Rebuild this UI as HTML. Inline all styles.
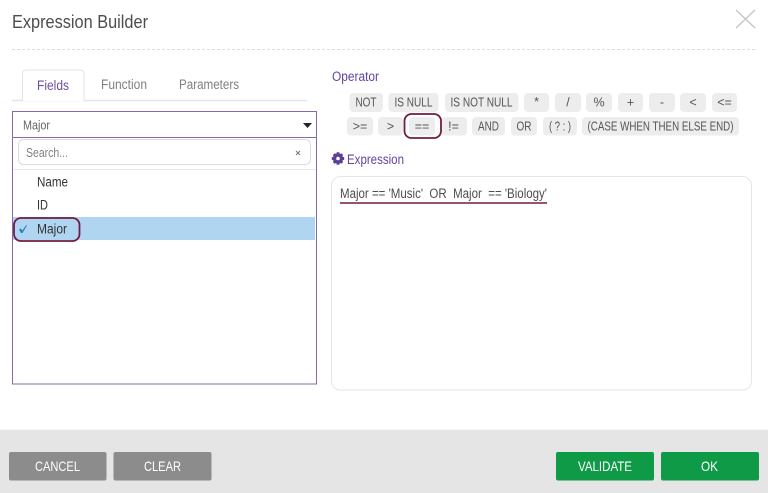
<!DOCTYPE html>
<html><head><meta charset="utf-8"><style>
html,body{margin:0;padding:0;background:#fff;overflow:hidden}
svg{display:block;font-family:"Liberation Sans",sans-serif;filter:blur(.3px)}
text{fill:#555}
.op{font-size:12.500px;fill:#555;text-anchor:middle}
.b{fill:#ededed}
.f{font-size:14px;fill:#fff}
</style></head><body>
<svg width="768" height="493" viewBox="0 0 768 493" xmlns="http://www.w3.org/2000/svg">
<rect width="768" height="493" fill="#fff"/>
<text x="12" y="28" font-size="18" textLength="136" lengthAdjust="spacingAndGlyphs" style="fill:#4d4d4d">Expression Builder</text>
<path d="M736 10L755 28M755 10L736 28" stroke="#c4c4c4" stroke-width="1.300" fill="none"/>
<line x1="12" y1="49.500" x2="756" y2="49.500" stroke="#dcdcdc" stroke-dasharray="3 2"/>

<line x1="12" y1="100.500" x2="307" y2="100.500" stroke="#e6e6e6" stroke-width="1.600"/>
<path d="M22.500 101V74q0-4 4-4H80q4 0 4 4V101" fill="#fff" stroke="#e4e4e4"/>
<text x="37" y="90" font-size="13.500" textLength="32" lengthAdjust="spacingAndGlyphs" style="fill:#6f4fa0">Fields</text>
<text x="101" y="89" font-size="13.500" textLength="46" lengthAdjust="spacingAndGlyphs" style="fill:#808080">Function</text>
<text x="179" y="89" font-size="13.500" textLength="60" lengthAdjust="spacingAndGlyphs" style="fill:#808080">Parameters</text>

<rect x="12.500" y="111.500" width="304" height="272.500" fill="#fff" stroke="#8668b4"/>
<line x1="13" y1="137.500" x2="316" y2="137.500" stroke="#8668b4"/>
<text x="23" y="129.500" font-size="13" textLength="27" lengthAdjust="spacingAndGlyphs" style="fill:#666">Major</text>
<path d="M303 123H312L307.500 128Z" fill="#222"/>
<rect x="18.500" y="139.500" width="292" height="25" rx="5" fill="#fff" stroke="#dcdcdc"/>
<text x="26" y="157" font-size="13" textLength="42" lengthAdjust="spacingAndGlyphs" style="fill:#808080">Search...</text>
<path d="M296 151L300 155M300 151L296 155" stroke="#777" stroke-width="1"/>
<line x1="13" y1="169.500" x2="316" y2="169.500" stroke="#e8e8e8"/>
<text x="37" y="186.500" font-size="13.500" textLength="31" lengthAdjust="spacingAndGlyphs" style="fill:#333">Name</text>
<text x="37" y="209.500" font-size="13.500" textLength="11" lengthAdjust="spacingAndGlyphs" style="fill:#333">ID</text>
<rect x="13" y="217" width="302" height="23" fill="#b0d5f0"/>
<text x="37" y="233.500" font-size="13.500" textLength="30" lengthAdjust="spacingAndGlyphs" style="fill:#333">Major</text>
<path d="M19 229.500L20.800 228.500L22.300 230.500L26.300 225L27 225.500L22.500 233H21Z" fill="#2a80c0"/>
<rect x="14" y="218" width="65.500" height="23" rx="7" fill="none" stroke="#731c42" stroke-width="1.800"/>

<text x="332" y="81" font-size="13.500" textLength="47" lengthAdjust="spacingAndGlyphs" style="fill:#6244a0">Operator</text>

<rect class="b" x="349.500" y="93" width="33.500" height="19" rx="4"/><text class="op" x="366" y="106.500" textLength="21" lengthAdjust="spacingAndGlyphs">NOT</text>
<rect class="b" x="388.500" y="93" width="50" height="19" rx="4"/><text class="op" x="413.500" y="106.500" textLength="38" lengthAdjust="spacingAndGlyphs">IS NULL</text>
<rect class="b" x="445" y="93" width="73.500" height="19" rx="4"/><text class="op" x="481.500" y="106.500" textLength="62" lengthAdjust="spacingAndGlyphs">IS NOT NULL</text>
<rect class="b" x="524" y="93" width="25" height="19" rx="4"/><text class="op" x="536.500" y="106">*</text>
<rect class="b" x="555" y="93" width="26" height="19" rx="4"/><text class="op" x="568" y="106.500">/</text>
<rect class="b" x="586" y="93" width="26" height="19" rx="4"/><text class="op" x="599" y="106.500">%</text>
<rect class="b" x="618" y="93" width="25" height="19" rx="4"/><text class="op" x="630.500" y="106.500">+</text>
<rect class="b" x="649" y="93" width="26" height="19" rx="4"/><text class="op" x="662" y="106.500">-</text>
<rect class="b" x="680" y="93" width="26" height="19" rx="4"/><text class="op" x="693" y="106.500">&lt;</text>
<rect class="b" x="712" y="93" width="25" height="19" rx="4"/><text class="op" x="724.500" y="106.500">&lt;=</text>

<rect class="b" x="347" y="117" width="26" height="18.500" rx="4"/><text class="op" x="360" y="130.500">&gt;=</text>
<rect class="b" x="378" y="117" width="25" height="18.500" rx="4"/><text class="op" x="390.500" y="130.500">&gt;</text>
<rect class="b" x="409" y="117" width="26" height="18.500" rx="4"/><text class="op" x="422" y="130.500">==</text>
<rect class="b" x="441" y="117" width="26" height="18.500" rx="4"/><text class="op" x="453.500" y="130.500">!=</text>
<rect class="b" x="472" y="117" width="33" height="18.500" rx="4"/><text class="op" x="488.500" y="130.500" textLength="21" lengthAdjust="spacingAndGlyphs">AND</text>
<rect class="b" x="511" y="117" width="26" height="18.500" rx="4"/><text class="op" x="524" y="130.500" textLength="15" lengthAdjust="spacingAndGlyphs">OR</text>
<rect class="b" x="543" y="117" width="34" height="18.500" rx="4"/><text class="op" x="560" y="130.500" textLength="22" lengthAdjust="spacingAndGlyphs">( ? : )</text>
<rect class="b" x="582" y="117" width="157" height="18.500" rx="4"/><text class="op" x="660.500" y="130.500" textLength="146" lengthAdjust="spacingAndGlyphs">(CASE WHEN THEN ELSE END)</text>
<rect x="404.500" y="114" width="36.500" height="24" rx="7" fill="none" stroke="#731c42" stroke-width="1.800"/>

<g transform="translate(338 158.500)" fill="#5b3f96">
<path d="M-1.300-6.200H1.300L1.800-4.400 3.300-5.300 5.100-3.500 4.300-2 6.200-1.300V1.300L4.300 2 5.100 3.500 3.300 5.300 1.800 4.400 1.300 6.200H-1.300L-1.800 4.400-3.300 5.300-5.100 3.500-4.300 2-6.200 1.300V-1.300L-4.300-2-5.100-3.500-3.300-5.300-1.800-4.400ZM0-1.800A1.800 1.800 0 1 0 0 1.800A1.800 1.800 0 1 0 0-1.800Z" fill-rule="evenodd"/>
</g>
<text x="347" y="164" font-size="13.500" textLength="57" lengthAdjust="spacingAndGlyphs" style="fill:#6244a0">Expression</text>

<rect x="331.500" y="176.500" width="420" height="213.500" rx="9" fill="#fff" stroke="#e6e6e6"/>
<text x="340" y="198" font-size="13.500" xml:space="preserve" textLength="207" lengthAdjust="spacingAndGlyphs" style="fill:#4d4d4d">Major == 'Music'  OR  Major  == 'Biology'</text>
<line x1="340" y1="203" x2="547" y2="203" stroke="#731c42" stroke-width="1.600"/>

<rect x="0" y="430" width="768" height="63" fill="#e5e5e5"/>
<line x1="0" y1="430" x2="768" y2="430" stroke="#ebebeb"/>
<rect x="9" y="452" width="97.500" height="28.500" rx="2" fill="#8c8c8c"/>
<rect x="113.500" y="452" width="98" height="28.500" rx="2" fill="#8c8c8c"/>
<rect x="556" y="452" width="98" height="28.500" rx="2" fill="#0f9a48"/>
<rect x="661" y="452" width="98" height="28.500" rx="2" fill="#0f9a48"/>
<text class="f" x="35" y="471" textLength="45" lengthAdjust="spacingAndGlyphs">CANCEL</text>
<text class="f" x="144" y="471" textLength="37" lengthAdjust="spacingAndGlyphs">CLEAR</text>
<text class="f" x="578" y="471" textLength="54" lengthAdjust="spacingAndGlyphs">VALIDATE</text>
<text class="f" x="701" y="471" textLength="17" lengthAdjust="spacingAndGlyphs">OK</text>
</svg>
</body></html>
